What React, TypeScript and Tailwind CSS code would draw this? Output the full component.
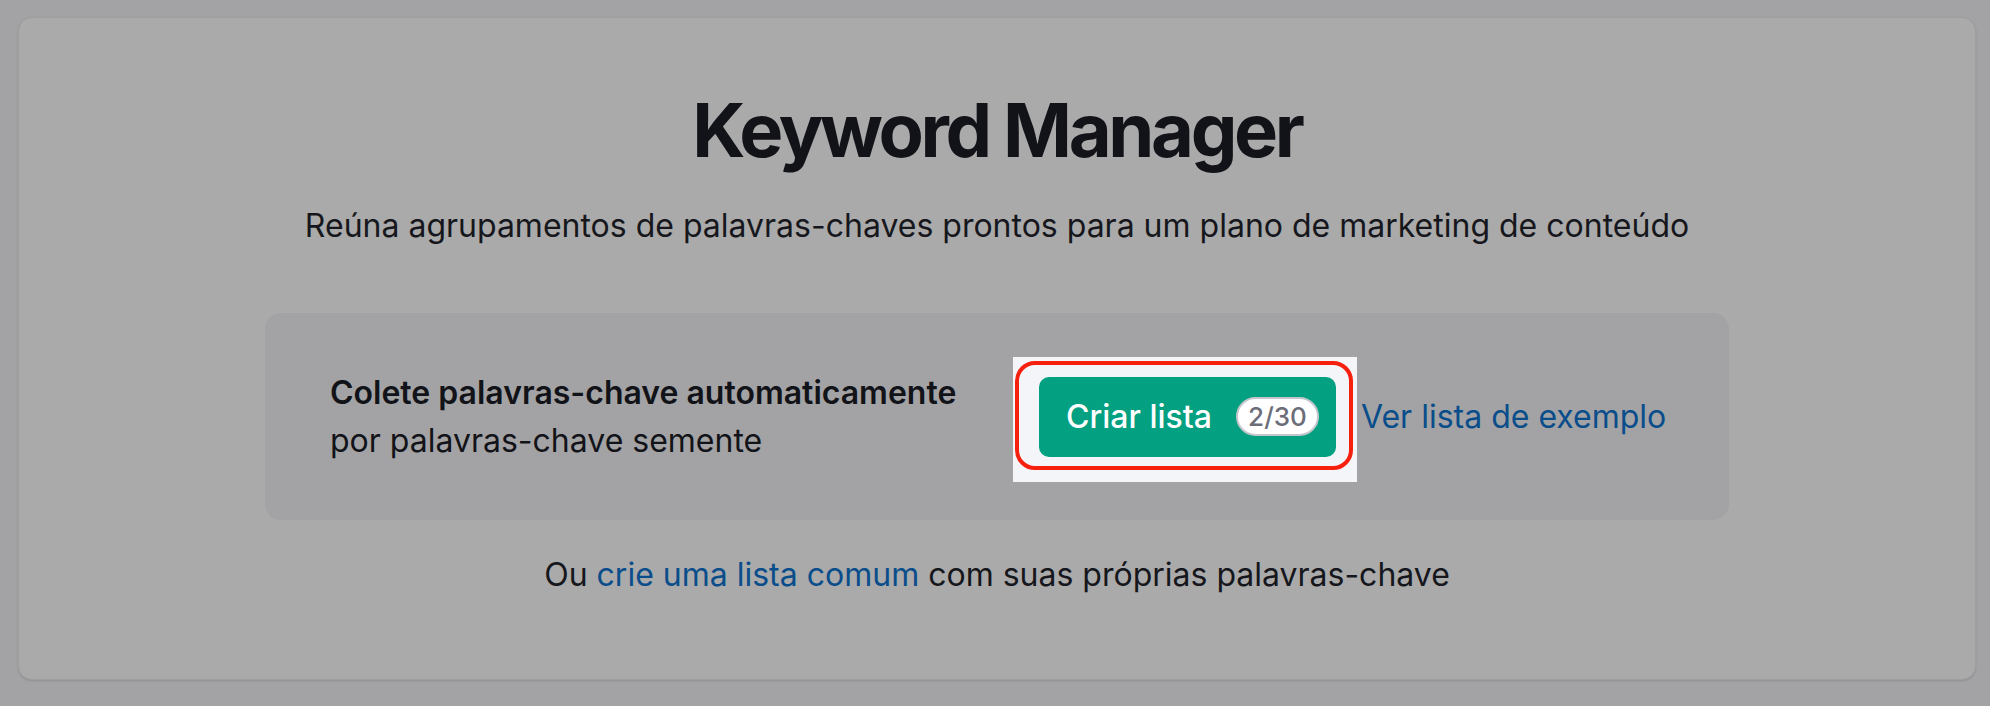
const FONT = "font-['Inter','Liberation_Sans',sans-serif]";

function CreateListButton() {
  return (
    <div className="relative ml-[1px]">
      {/* spotlight + red ring from the screenshot annotation */}
      <div className="absolute -left-[26px] -right-[21px] -top-[20px] -bottom-[25px] bg-[#f4f5f9]" />
      <div className="absolute -left-[24px] -right-[17px] -top-[16px] -bottom-[13px] rounded-[20px] border-4 border-[#f6200f]" />
      <button
        type="button"
        className="relative flex h-[80px] w-[297px] items-center rounded-[10px] bg-[#03a081] pl-[27px] text-white"
      >
        <span className="text-[32px] font-medium leading-none">Criar lista</span>
        <span className="ml-[24px] flex h-[39px] w-[83px] items-center justify-center rounded-full border-2 border-[#c4c6cc] bg-white text-[26px] font-medium leading-none text-[#6b6d79]">
          2/30
        </span>
      </button>
    </div>
  );
}

export default function App() {
  return (
    <div className={`${FONT} min-h-screen bg-[#a3a3a6] pl-[18px] pr-[14px] pt-[17px] pb-[26px] text-[#121318]`}>
      <div className="flex h-[663px] flex-col items-center rounded-[14px] border border-[#9f9fa2] bg-[#aaaaaa] pt-[72px] shadow-[0_1px_2px_rgba(0,0,0,0.12)]">
        <h1 className="text-[74px] font-bold leading-[80px] tracking-[-0.045em]">Keyword Manager</h1>
        <p className="mt-[36px] text-[32px] leading-[40px] text-[#16171c]">
          Reúna agrupamentos de palavras-chaves prontos para um plano de marketing de conteúdo
        </p>

        <div className="mt-[67px] flex h-[207px] w-[1464px] items-center rounded-[16px] bg-[#a3a3a5] pl-[65px]">
          <div className="w-[708px] text-[32px] leading-[48px]">
            <div className="font-semibold">Colete palavras-chave automaticamente</div>
            <div>por palavras-chave semente</div>
          </div>
          <CreateListButton />
          <a href="#" className="ml-[25px] text-[32px] leading-[40px] text-[#0a4d8b]">
            Ver lista de exemplo
          </a>
        </div>

        <p className="mt-[35px] text-[32px] leading-[40px] text-[#16171c]">
          Ou <a href="#" className="text-[#0a4d8b]">crie uma lista comum</a> com suas próprias palavras-chave
        </p>
      </div>
    </div>
  );
}
